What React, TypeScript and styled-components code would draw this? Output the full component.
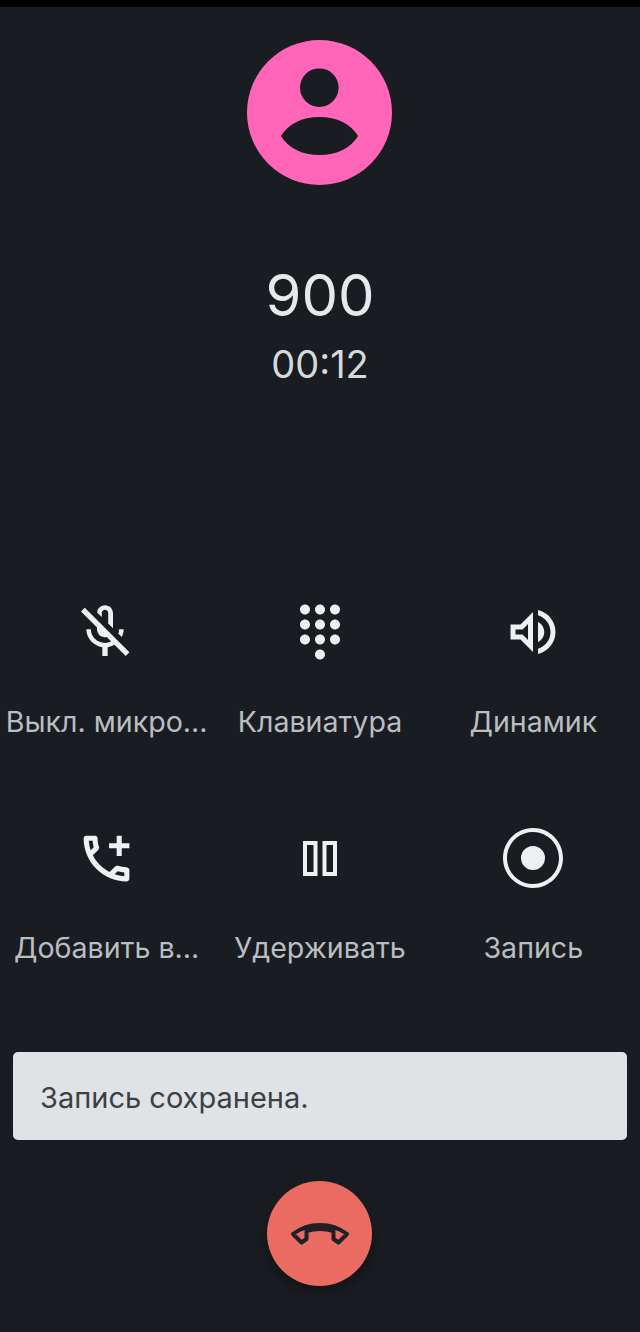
import styled, { createGlobalStyle } from "styled-components";

const GlobalStyle = createGlobalStyle`
  html, body {
    margin: 0;
    padding: 0;
    background: #191c20;
  }
`;

const actions = [
  {
    label: "Выкл. микро...",
    size: 64,
    shift: -2,
    path: "M10.8 4.9c0-.66.54-1.2 1.2-1.2s1.2.54 1.2 1.2l-.01 3.91L15 10.6V5c0-1.66-1.34-3-3-3-1.54 0-2.79 1.16-2.96 2.65l1.76 1.76V4.9zM19 11h-1.7c0 .58-.1 1.13-.27 1.64l1.27 1.27c.44-.88.7-1.87.7-2.91zM4.41 2.86L3 4.27l6 6V11c0 1.66 1.34 3 3 3 .23 0 .44-.03.65-.08l1.66 1.66c-.71.33-1.5.52-2.31.52-2.76 0-5.3-2.1-5.3-5.1H5c0 3.41 2.72 6.23 6 6.72V21h2v-3.28c.91-.13 1.77-.45 2.55-.9l4.2 4.2 1.41-1.41L4.41 2.86z",
  },
  {
    label: "Клавиатура",
    size: 60,
    shift: 0,
    path: "M12 19c-1.1 0-2 .9-2 2s.9 2 2 2 2-.9 2-2-.9-2-2-2zM6 1c-1.1 0-2 .9-2 2s.9 2 2 2 2-.9 2-2-.9-2-2-2zm0 6c-1.1 0-2 .9-2 2s.9 2 2 2 2-.9 2-2-.9-2-2-2zm0 6c-1.1 0-2 .9-2 2s.9 2 2 2 2-.9 2-2-.9-2-2-2zm12-8c1.1 0 2-.9 2-2s-.9-2-2-2-2 .9-2 2 .9 2 2 2zm-6 8c-1.1 0-2 .9-2 2s.9 2 2 2 2-.9 2-2-.9-2-2-2zm6 0c-1.1 0-2 .9-2 2s.9 2 2 2 2-.9 2-2-.9-2-2-2zm0-6c-1.1 0-2 .9-2 2s.9 2 2 2 2-.9 2-2-.9-2-2-2zm-6 0c-1.1 0-2 .9-2 2s.9 2 2 2 2-.9 2-2-.9-2-2-2zm0-6c-1.1 0-2 .9-2 2s.9 2 2 2 2-.9 2-2-.9-2-2-2z",
  },
  {
    label: "Динамик",
    size: 60,
    shift: 0,
    path: "M3 9v6h4l5 5V4L7 9H3zm7-.17v6.34L7.83 13H5v-2h2.83L10 8.83zM16.5 12c0-1.77-1.02-3.29-2.5-4.03v8.05c1.48-.73 2.5-2.25 2.5-4.02zM14 3.23v2.06c2.89.86 5 3.54 5 6.71s-2.11 5.85-5 6.71v2.06c4.01-.91 7-4.49 7-8.77 0-4.28-2.99-7.86-7-8.77z",
  },
  {
    label: "Добавить в...",
    size: 61,
    shift: 0,
    path: "M20 15.45c-1.25 0-2.45-.2-3.57-.57-.1-.03-.21-.05-.31-.05-.26 0-.51.1-.71.29l-2.2 2.2c-2.83-1.44-5.15-3.75-6.59-6.59l2.2-2.21c.28-.26.36-.65.25-1C8.7 6.45 8.5 5.25 8.5 4c0-.55-.45-1-1-1H4c-.55 0-1 .45-1 1 0 9.39 7.61 17 17 17 .55 0 1-.45 1-1v-3.5c0-.55-.45-1-1-1zM5.03 5h1.5c.07.88.22 1.75.45 2.58l-1.2 1.21c-.4-1.21-.66-2.47-.75-3.79zM19 18.97c-1.32-.09-2.6-.35-3.8-.76l1.2-1.2c.85.24 1.72.39 2.6.45v1.51zM18 6V3h-2v3h-3v2h3v3h2V8h3V6z",
  },
  {
    label: "Удерживать",
    size: 60,
    shift: 0,
    path: "M5.200 5.200h5.800v14H5.200zM6.800 6.800v10.800h2.600V6.800zM13 5.200h5.800v14H13zM14.600 6.800v10.800h2.600V6.800z",
  },
  {
    label: "Запись",
    size: 60,
    shift: 0,
    path: "M12 0C5.38 0 0 5.38 0 12s5.38 12 12 12 12-5.38 12-12S18.62 0 12 0zm0 22.4C6.26 22.4 1.6 17.74 1.6 12S6.26 1.6 12 1.6 22.4 6.26 22.4 12 17.74 22.4 12 22.4zM12 7.2a4.8 4.8 0 1 0 0 9.6 4.8 4.8 0 0 0 0-9.6z",
  },
];

export default function App() {
  return (
    <>
      <GlobalStyle />
      <Screen>
        <StatusBar />
        <Avatar>
          <svg width="145" height="145" viewBox="0 0 145 145">
            <circle cx="72.300" cy="47.700" r="19.300" fill="#191c20" />
            <path
              d="M34 96C41 84 55 77 72.500 77C90 77 104 84 111 96C104 108 90 115 72.500 115C55 115 41 108 34 96z"
              fill="#191c20"
            />
          </svg>
        </Avatar>
        <CallerNumber>900</CallerNumber>
        <CallTimer>00:12</CallTimer>
        <ActionGrid>
          {actions.map((action) => (
            <Action key={action.label}>
              <IconSlot $shift={action.shift}>
                <svg width={action.size} height={action.size} viewBox="0 0 24 24" fill="#eef0f2">
                  <path d={action.path} />
                </svg>
              </IconSlot>
              <ActionLabel>{action.label}</ActionLabel>
            </Action>
          ))}
        </ActionGrid>
        <Toast>Запись сохранена.</Toast>
        <HangUp aria-label="hang up">
          <svg width="60" height="60" viewBox="50 43 60 60" fill="none" stroke="#1d2024" strokeWidth="4" strokeLinejoin="round">
            <path d="M53 73C61 67 70 64 80 64C90 64 99 67 107 73L98.500 81.500L93.500 78V70C85 67.500 75 67.500 66.500 70V78L61.500 81.500z" />
          </svg>
        </HangUp>
      </Screen>
    </>
  );
}

const Screen = styled.div`
  width: 640px;
  height: 1332px;
  background: #191c20;
  display: flex;
  flex-direction: column;
  align-items: center;
  font-family: Inter, Roboto, sans-serif;
  overflow: hidden;
`;

const StatusBar = styled.div`
  width: 100%;
  height: 7px;
  background: #000;
`;

const Avatar = styled.div`
  width: 145px;
  height: 145px;
  margin-top: 33px;
  margin-right: 1px;
  border-radius: 50%;
  background: #ff66b8;
  display: flex;
`;

const CallerNumber = styled.div`
  margin-top: 72px;
  height: 76px;
  line-height: 76px;
  font-size: 58px;
  font-weight: 400;
  color: #e6e8ea;
`;

const CallTimer = styled.div`
  margin-top: 9px;
  height: 45px;
  line-height: 44px;
  font-size: 38px;
  font-weight: 400;
  color: #d6d9dc;
`;

const ActionGrid = styled.div`
  width: 100%;
  margin-top: 213px;
  display: grid;
  grid-template-columns: repeat(3, 1fr);
  row-gap: 84px;
`;

const Action = styled.div`
  display: flex;
  flex-direction: column;
  align-items: center;
`;

const IconSlot = styled.div<{ $shift: number }>`
  height: 64px;
  display: flex;
  align-items: center;
  justify-content: center;
  margin-left: ${(p) => p.$shift * 2}px;
`;

const ActionLabel = styled.div`
  margin-top: 38px;
  height: 40px;
  line-height: 40px;
  font-size: 28.600px;
  color: #b9bec2;
  white-space: nowrap;
`;

const Toast = styled.div`
  width: 614px;
  height: 88px;
  box-sizing: border-box;
  margin-top: 84px;
  padding: 3px 0 0 27px;
  display: flex;
  align-items: center;
  background: #dfe3e6;
  border-radius: 5px;
  font-size: 29px;
  color: #3c4043;
`;

const HangUp = styled.button`
  width: 105px;
  height: 105px;
  margin-top: 41px;
  margin-right: 1px;
  padding: 0;
  border: none;
  border-radius: 50%;
  background: #ea6b62;
  box-shadow: 0 6px 14px rgba(0, 0, 0, 0.3);
  display: flex;
  align-items: center;
  justify-content: center;
`;
